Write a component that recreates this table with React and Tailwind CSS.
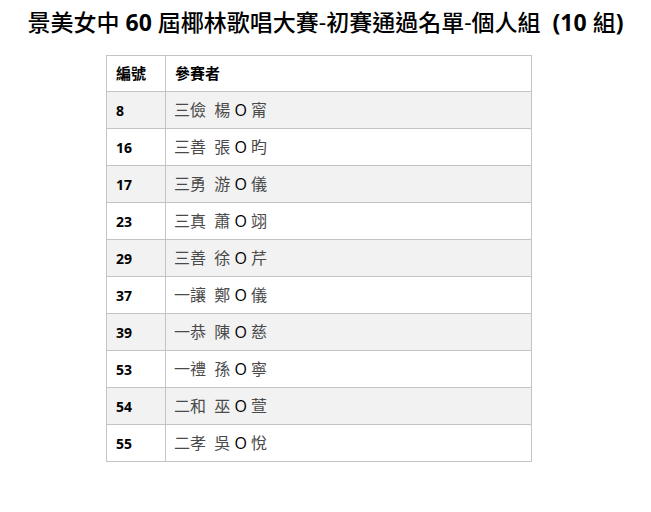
const rows = [
  ['8', '三儉', '楊', '甯'],
  ['16', '三善', '張', '昀'],
  ['17', '三勇', '游', '儀'],
  ['23', '三真', '蕭', '翊'],
  ['29', '三善', '徐', '芹'],
  ['37', '一讓', '鄭', '儀'],
  ['39', '一恭', '陳', '慈'],
  ['53', '一禮', '孫', '寧'],
  ['54', '二和', '巫', '萱'],
  ['55', '二孝', '吳', '悅'],
];

export default function App() {
  return (
    <div
      className="w-[651px] h-[512px] bg-white"
      style={{ fontFamily: '"Open Sans", "Noto Sans CJK TC", sans-serif' }}
    >
      <h1 className="pt-[6px] text-center text-[23px] leading-[32px] font-medium text-black whitespace-nowrap">
        景美女中 <span className="font-bold">60</span> 屆椰林歌唱大賽-初賽通過名單-個人組 &nbsp;
        <span className="font-bold">(10 </span>組<span className="font-bold">)</span>
      </h1>
      <table className="ml-[106px] mt-[17px] w-[426px] border-collapse text-[14px]">
        <thead>
          <tr className="h-[36px] bg-white">
            <th className="w-[59px] border border-[#c4c4c4] pl-[9px] text-left text-[15px] font-bold text-black">編號</th>
            <th className="border border-[#c4c4c4] pl-[9px] text-left text-[15px] font-bold text-black">參賽者</th>
          </tr>
        </thead>
        <tbody>
          {rows.map((r, i) => (
            <tr key={r[0]} className={i % 2 === 0 ? 'h-[37px] bg-[#f2f2f2]' : 'h-[37px] bg-white'}>
              <td className="border border-[#c4c4c4] pl-[9px] font-bold text-black">{r[0]}</td>
              <td className="border border-[#c4c4c4] pl-[8px] text-[16px] text-[#4a4a4a]">
                {r[1]}&nbsp; {r[2]} <span className="text-black">O</span> {r[3]}
              </td>
            </tr>
          ))}
        </tbody>
      </table>
    </div>
  );
}
